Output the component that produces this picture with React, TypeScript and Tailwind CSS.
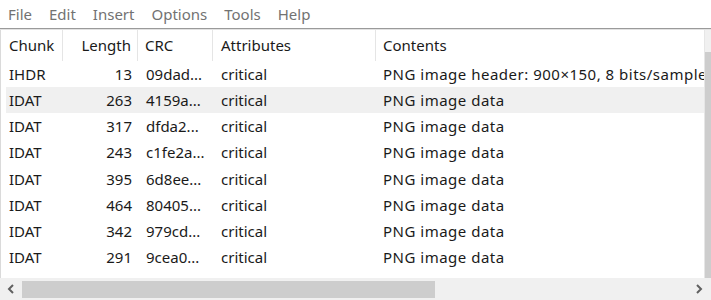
const ROWS = [
  { chunk: "IHDR", length: 13, crc: "09dad...", attr: "critical", contents: "PNG image header: 900×150, 8 bits/sample, truecolor, noninterlaced" },
  { chunk: "IDAT", length: 263, crc: "4159a...", attr: "critical", contents: "PNG image data" },
  { chunk: "IDAT", length: 317, crc: "dfda2...", attr: "critical", contents: "PNG image data" },
  { chunk: "IDAT", length: 243, crc: "c1fe2a...", attr: "critical", contents: "PNG image data" },
  { chunk: "IDAT", length: 395, crc: "6d8ee...", attr: "critical", contents: "PNG image data" },
  { chunk: "IDAT", length: 464, crc: "80405...", attr: "critical", contents: "PNG image data" },
  { chunk: "IDAT", length: 342, crc: "979cd...", attr: "critical", contents: "PNG image data" },
  { chunk: "IDAT", length: 291, crc: "9cea0...", attr: "critical", contents: "PNG image data" },
  { chunk: "IDAT", length: 308, crc: "a31b7...", attr: "critical", contents: "PNG image data" },
];

const MENU = ["File", "Edit", "Insert", "Options", "Tools", "Help"];

export default function App() {
  return (
    <div
      className="w-[711px] h-[300px] bg-white overflow-hidden flex flex-col text-[15px] text-[#1a1a1a]"
      style={{ fontFamily: '"Noto Sans", "Open Sans", sans-serif' }}
    >
      {/* Menu bar */}
      <div className="h-[28px] flex items-center gap-[17px] pl-[8px] text-[#727272] shrink-0">
        {MENU.map((m) => (
          <span key={m}>{m}</span>
        ))}
      </div>

      {/* List frame */}
      <div className="flex-1 flex flex-col border-t border-[#9a9a9a] min-h-0">
        <div className="flex-1 flex min-h-0 border-t border-[#e2e2e2]">
          <div className="flex-1 overflow-hidden border-l border-[#dadada] relative">
            {/* Header */}
            <div className="h-[31px] flex items-center whitespace-nowrap">
              <div className="w-[62px] h-full flex items-center pl-[8px] border-r border-[#e5e5e5]">Chunk</div>
              <div className="w-[75px] h-full flex items-center justify-end pr-[6px] border-r border-[#e5e5e5]">Length</div>
              <div className="w-[75px] h-full flex items-center pl-[7px] border-r border-[#e5e5e5]">CRC</div>
              <div className="w-[163px] h-full flex items-center pl-[8px] border-r border-[#e5e5e5]">Attributes</div>
              <div className="flex-1 h-full flex items-center pl-[7px]">Contents</div>
            </div>
            {/* Rows */}
            {ROWS.map((r, i) => (
              <div
                key={i}
                className={`h-[26.2px] flex items-center whitespace-nowrap ml-[5px] ${i === 1 ? "bg-[#f0f0f0]" : ""}`}
              >
                <div className="w-[57px] shrink-0 pl-[3px]">{r.chunk}</div>
                <div className="w-[75px] shrink-0 text-right pr-[6px]">{r.length}</div>
                <div className="w-[75px] shrink-0 pl-[8px]">{r.crc}</div>
                <div className="w-[163px] shrink-0 pl-[8px]">{r.attr}</div>
                <div className="shrink-0 pl-[7px] tracking-[0.5px]">{r.contents}</div>
              </div>
            ))}
          </div>
          {/* Vertical scrollbar (cut off) */}
          <div className="w-[7px] shrink-0 bg-[#f0f0f0] border-l border-[#e6e6e6] flex flex-col">
            <div className="h-[22px]" />
            <div className="flex-1 bg-[#cdcdcd]" />
          </div>
        </div>

        {/* Horizontal scrollbar */}
        <div className="h-[22px] shrink-0 bg-[#f0f0f0] flex items-center">
          <div className="w-[22px] h-full flex items-center justify-center">
            <svg width="8" height="10" viewBox="0 0 8 10">
              <path d="M6 1 L2 5 L6 9" fill="none" stroke="#606060" strokeWidth="2" />
            </svg>
          </div>
          <div className="w-[413px] h-[17px] bg-[#cdcdcd]" />
          <div className="flex-1" />
          <div className="w-[24px] h-full flex items-center justify-center">
            <svg width="8" height="10" viewBox="0 0 8 10">
              <path d="M2 1 L6 5 L2 9" fill="none" stroke="#606060" strokeWidth="2" />
            </svg>
          </div>
        </div>
      </div>
    </div>
  );
}
